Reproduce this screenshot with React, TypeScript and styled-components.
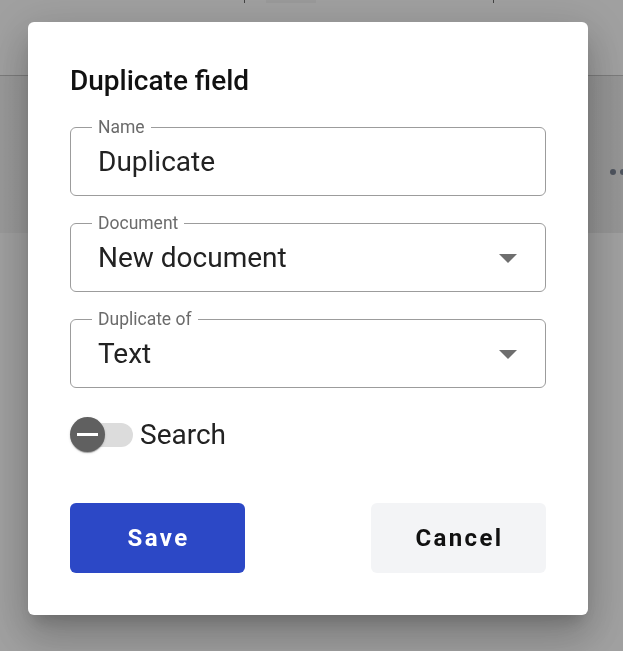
import React from "react";
import styled, { createGlobalStyle } from "styled-components";

const Global = createGlobalStyle`
  html, body { margin: 0; padding: 0; }
  body {
    width: 623px;
    height: 651px;
    overflow: hidden;
    font-family: Roboto, "Liberation Sans", Arial, sans-serif;
    background: #ffffff;
  }
`;

const Page = styled.div`
  display: flex;
  flex-direction: column;
  height: 651px;
  background: #ffffff;
`;

const TopBar = styled.div`
  height: 76px;
  box-sizing: border-box;
  display: flex;
  align-items: flex-start;
  padding-left: 244px;
  border-bottom: 1px solid #c4c4c4;
  background: #fefefe;
`;

const Tick = styled.span`
  width: 1px;
  height: 3px;
  background: #6a6a6a;
`;

const TabStub = styled.span`
  width: 50px;
  height: 3px;
  margin: 0 177px 0 21px;
  background: #f4f4f4;
`;

const Band = styled.div`
  height: 157px;
  display: flex;
  align-items: center;
  justify-content: flex-end;
  background: linear-gradient(90deg, #f3f3f3, #ececec);
`;

const Dots = styled.div`
  display: flex;
  gap: 4px;
  margin-right: -3px;
  margin-top: 34px;
`;

const Dot = styled.span`
  width: 6px;
  height: 6px;
  border-radius: 50%;
  background: #7b8494;
`;

const Rest = styled.div`
  flex: 1;
  background: #fefefe;
`;

const Overlay = styled.div`
  position: fixed;
  inset: 0;
  background: rgba(0, 0, 0, 0.37);
  display: flex;
  align-items: flex-start;
  padding: 22px 0 0 28px;
`;

const Dialog = styled.div`
  width: 560px;
  box-sizing: border-box;
  padding: 43px 42px 42px;
  background: #ffffff;
  border-radius: 6px;
  box-shadow: 0 11px 15px -7px rgba(0, 0, 0, 0.2),
    0 24px 38px 3px rgba(0, 0, 0, 0.14), 0 9px 46px 8px rgba(0, 0, 0, 0.12);
  display: flex;
  flex-direction: column;
`;

const Title = styled.h2`
  margin: 0 0 30px;
  font-size: 28px;
  line-height: 32px;
  font-weight: 500;
  color: #111111;
`;

const Fields = styled.div`
  display: flex;
  flex-direction: column;
  gap: 27px;
`;

const Field = styled.div`
  position: relative;
  height: 69px;
  box-sizing: border-box;
  border: 1px solid #9c9c9c;
  border-radius: 6px;
  display: flex;
  align-items: center;
  padding: 0 27px;
`;

const FieldLabel = styled.label`
  position: absolute;
  top: -10px;
  left: 21px;
  padding: 0 6px;
  background: #ffffff;
  font-size: 17.5px;
  line-height: 18px;
  color: #6b6b6b;
`;

const Value = styled.span`
  flex: 1;
  font-size: 28px;
  line-height: 32px;
  color: #222222;
`;

const Caret = styled.span`
  width: 0;
  height: 0;
  border-left: 9px solid transparent;
  border-right: 9px solid transparent;
  border-top: 9px solid #6e6e6e;
  margin-right: 1px;
  margin-top: 2px;
`;

const SwitchRow = styled.div`
  margin-top: 29px;
  display: flex;
  align-items: center;
  height: 35px;
`;

const Switch = styled.span`
  position: relative;
  width: 63px;
  height: 35px;
  display: flex;
  align-items: center;
  justify-content: flex-end;
`;

const Track = styled.span`
  width: 59px;
  height: 24px;
  border-radius: 12px;
  background: #dcdcdc;
`;

const Thumb = styled.span`
  position: absolute;
  left: 0;
  top: 0;
  width: 35px;
  height: 35px;
  border-radius: 50%;
  background: #606060;
  box-shadow: 0 2px 1px -1px rgba(0, 0, 0, 0.2), 0 1px 1px 0 rgba(0, 0, 0, 0.14),
    0 1px 3px 0 rgba(0, 0, 0, 0.12);
  display: flex;
  align-items: center;
  justify-content: center;
`;

const Minus = styled.span`
  width: 21px;
  height: 3px;
  background: #ffffff;
`;

const SwitchLabel = styled.span`
  margin-left: 7px;
  font-size: 28px;
  line-height: 32px;
  color: #222222;
`;

const Actions = styled.div`
  margin-top: 51px;
  display: flex;
  justify-content: space-between;
`;

const Button = styled.button<{ $primary?: boolean }>`
  width: 175px;
  height: 70px;
  border: none;
  border-radius: 6px;
  font-family: Roboto, "Liberation Sans", Arial, sans-serif;
  font-size: 24px;
  font-weight: 700;
  letter-spacing: 2.4px;
  padding: 0 0 0 2px;
  background: ${(p) => (p.$primary ? "#2c48c6" : "#f3f4f6")};
  color: ${(p) => (p.$primary ? "#ffffff" : "#111111")};
  cursor: pointer;
`;

export default function App() {
  return (
    <>
      <Global />
      <Page>
        <TopBar>
          <Tick />
          <TabStub />
          <Tick />
        </TopBar>
        <Band>
          <Dots>
            <Dot />
            <Dot />
          </Dots>
        </Band>
        <Rest />
      </Page>
      <Overlay>
        <Dialog>
          <Title>Duplicate field</Title>
          <Fields>
            <Field>
              <FieldLabel>Name</FieldLabel>
              <Value>Duplicate</Value>
            </Field>
            <Field>
              <FieldLabel>Document</FieldLabel>
              <Value>New document</Value>
              <Caret />
            </Field>
            <Field>
              <FieldLabel>Duplicate of</FieldLabel>
              <Value>Text</Value>
              <Caret />
            </Field>
          </Fields>
          <SwitchRow>
            <Switch>
              <Track />
              <Thumb>
                <Minus />
              </Thumb>
            </Switch>
            <SwitchLabel>Search</SwitchLabel>
          </SwitchRow>
          <Actions>
            <Button $primary>Save</Button>
            <Button>Cancel</Button>
          </Actions>
        </Dialog>
      </Overlay>
    </>
  );
}
